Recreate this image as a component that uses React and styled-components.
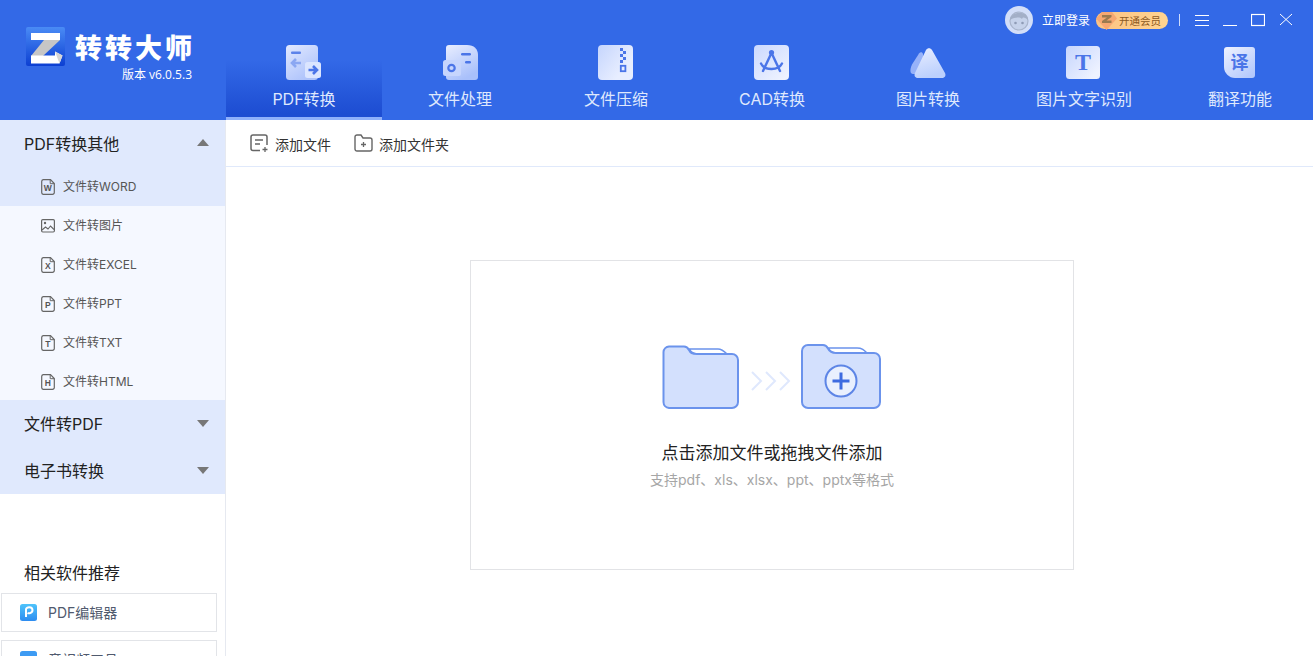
import React from "react";
import styled, { createGlobalStyle } from "styled-components";

const LATIN = `"Inter", "Noto Sans CJK SC", sans-serif`;

const Global = createGlobalStyle`
  html, body { margin: 0; padding: 0; height: 100%; overflow: hidden; background: #fff; }
  body { font-family: ${LATIN}; }
  #root { height: 100%; }
  * { box-sizing: border-box; }
`;

const Page = styled.div`
  width: 1313px; height: 656px; display: flex; flex-direction: column; overflow: hidden; background: #fff;
`;
const Header = styled.header`
  height: 120px; flex: none; background: #3369e7; display: flex;
`;
const Brand = styled.div`
  width: 226px; flex: none; padding: 27px 0 0 26px; display: flex; flex-direction: column;
`;
const BrandRow = styled.div`
  display: flex; align-items: center; gap: 10px; height: 39px;
`;
const BrandName = styled.div`
  font: 900 27px/1 "Noto Sans CJK SC", sans-serif; color: #fff; letter-spacing: 3px; white-space: nowrap;
`;
const Version = styled.div`
  width: 166px; text-align: right; font: 400 12px/14px "Open Sans", "Noto Sans CJK SC", sans-serif; color: #fff; margin-top: 2px;
`;
const HeaderMain = styled.div`
  flex: 1; display: flex; flex-direction: column; min-width: 0;
`;
const TopBar = styled.div`
  height: 42px; flex: none; display: flex; align-items: flex-start; justify-content: flex-end; padding: 6px 20px 0 0;
`;
const Avatar = styled.div`
  width: 28px; height: 28px; flex: none;
`;
const Login = styled.span`
  font: 400 12px/28px "Noto Sans CJK SC", sans-serif; color: #fff; margin-left: 9px; white-space: nowrap;
`;
const VipBadge = styled.div`
  position: relative; margin: 6px 0 0 6px; width: 72px; height: 17px; flex: none; border-radius: 9px;
  background: linear-gradient(90deg, #fcc384, #ffd490);
  font: 400 10.5px/17px "Noto Sans CJK SC", sans-serif; color: #8d5a22; padding-left: 23px; white-space: nowrap;
`;
const VipGem = styled.svg`
  position: absolute; left: -1px; top: -2px;
`;
const Divider = styled.div`
  width: 1px; height: 12px; background: #cfdcfb; margin: 8px 0 0 11px; flex: none;
`;
const WinButton = styled.button`
  border: 0; background: none; padding: 0; width: 14px; height: 14px; margin: 7px 0 0 ${p => p.$gap}px; display: block; flex: none;
  svg { display: block; }
`;
const Tabs = styled.nav`
  flex: 1; display: flex;
`;
const Tab = styled.div`
  width: 156px; flex: none; height: 78px; display: flex; flex-direction: column; align-items: center; padding-top: 1px;
  ${p => p.$active && `
    background: linear-gradient(180deg, rgba(30,78,208,0) 18px, #1d4dd2 72px);
    border-bottom: 3px solid #8fb0fb;
  `}
`;
const TabIconBox = styled.div`
  width: 40px; height: 40px; flex: none;
  svg { display: block; }
`;
const TabLabel = styled.div`
  font: 400 16px/22px ${LATIN}; color: #dfe8fd; margin-top: 5px; white-space: nowrap;
`;

const Body = styled.div`
  flex: 1; display: flex; min-height: 0;
`;
const Sidebar = styled.aside`
  width: 226px; flex: none; border-right: 1px solid #e6e9f0; display: flex; flex-direction: column; overflow: hidden;
`;
const GroupHead = styled.div`
  height: 47px; flex: none; background: #e0e9fd; display: flex; align-items: center; justify-content: space-between;
  padding: 0 16px 0 24px; font: 400 16px/22px ${LATIN}; color: #222;
`;
const Caret = styled.span`
  width: 0; height: 0; border-left: 6px solid transparent; border-right: 6px solid transparent;
  ${p => p.$up ? "border-bottom: 7px solid #777; margin-top: -3px;" : "border-top: 7px solid #777;"}
`;
const SubList = styled.div`
  background: #f5f8ff; flex: none;
`;
const SubItem = styled.div`
  height: 39px; display: flex; align-items: center; padding-left: 41px; gap: 8px;
  font: 400 12px/16px ${LATIN}; color: #555;
  background: ${p => (p.$active ? "#e0e9fd" : "transparent")};
  &:last-child { height: 38px; padding-top: 1px; }
  svg { display: block; flex: none; }
`;
const RecTitle = styled.div`
  margin: 67px 0 0 24px; font: 400 16px/22px "Noto Sans CJK SC", sans-serif; color: #222;
`;
const RecCard = styled.div`
  margin: ${p => p.$first ? "10px" : "8px"} 0 0 1px; width: 216px; height: 39px; flex: none; border: 1px solid #e2e4e8; background: #fff;
  display: flex; align-items: center; padding-left: 18px; gap: 11px;
  font: 400 14px/20px ${LATIN}; color: #505a6e;
  svg { display: block; flex: none; }
`;
const Main = styled.main`
  flex: 1; min-width: 0; display: flex; flex-direction: column;
`;
const Toolbar = styled.div`
  height: 47px; flex: none; border-bottom: 1px solid #e0e9fb; display: flex; align-items: center; padding: 0 0 2px 24px; gap: 23px;
`;
const ToolButton = styled.div`
  display: flex; align-items: center; gap: 6px;
  svg { display: block; margin-top: 2px; }
`;
const ToolLabel = styled.span`
  font: 400 14px/20px "Noto Sans CJK SC", sans-serif; color: #333; margin-top: 4px;
`;
const DropBox = styled.div`
  width: 604px; height: 310px; margin: 93px 0 0 244px; border: 1px solid #e2e3e6; display: flex; flex-direction: column; align-items: center; padding: 82px 0 0 0;
  flex: none;
`;
const Illustration = styled.div`
  height: 66px; svg { display: block; }
`;
const DropTitle = styled.div`
  margin-top: 31px; font: 400 17px/24px "Noto Sans CJK SC", sans-serif; color: #222;
`;
const DropHint = styled.div`
  margin-top: 6px; font: 400 14px/20px ${LATIN}; color: #a6a6a6;
`;

const Grad = ({ id, x2 = 1, y2 = 1, from = "#cfdcff", to = "#f3f6ff" }) => (
  <defs>
    <linearGradient id={id} x1="0" y1="0" x2={x2} y2={y2}>
      <stop offset="0" stopColor={from} />
      <stop offset="1" stopColor={to} />
    </linearGradient>
  </defs>
);

const IconPdf = () => (
  <svg width="40" height="40" viewBox="0 0 40 40">
    <Grad id="pa" from="#e2e9ff" to="#aec3fb" x2="0.6" />
    <rect x="2" y="2" width="32" height="35" rx="3.5" fill="url(#pa)" />
    <rect x="7" y="8.5" width="10" height="2.4" rx="1" fill="#5d83ea" />
    <path d="M12 16l-4 4 4 4M8 20h9" fill="none" stroke="#8ba7f2" strokeWidth="2.6" />
    <rect x="21" y="19" width="16" height="16" rx="2.5" fill="#dbe5ff" />
    <path d="M29 23l4 4-4 4M24.500 27H33" fill="none" stroke="#4b75e8" strokeWidth="2.6" />
  </svg>
);
const IconProcess = () => (
  <svg width="40" height="40" viewBox="0 0 40 40">
    <Grad id="fa" from="#e9eeff" to="#a9c0fb" x2="0.5" />
    <path d="M9 2h18c7 0 11 4 11 10v22a3 3 0 0 1-3 3H9a3 3 0 0 1-3-3V5a3 3 0 0 1 3-3z" fill="url(#fa)" />
    <rect x="3" y="17" width="18" height="16" rx="2.5" fill="#c6d5fd" />
    <circle cx="11.500" cy="25" r="3.200" fill="none" stroke="#4b75e8" strokeWidth="2.200" />
    <rect x="21" y="10" width="10" height="2.400" rx="1.200" fill="#4b75e8" />
    <rect x="25" y="18" width="6" height="2.400" rx="1.200" fill="#4b75e8" />
  </svg>
);
const IconZip = () => (
  <svg width="40" height="40" viewBox="0 0 40 40">
    <Grad id="za" from="#c5d5fd" to="#e8eeff" x2="0.8" y2="0.6" />
    <rect x="2" y="2" width="35" height="35" rx="4" fill="url(#za)" />
    <path d="M24 5h3v3h-3zM27 8h3v3h-3zM24 11h3v3h-3zM27 14h3v3h-3zM24 17h3v3h-3z" fill="#4b75e8" />
    <rect x="24.800" y="22.800" width="4.600" height="5.400" fill="none" stroke="#4b75e8" strokeWidth="1.800" />
  </svg>
);
const IconCad = () => (
  <svg width="40" height="40" viewBox="0 0 40 40">
    <Grad id="ca" from="#cbd9fe" to="#eef2ff" x2="0.8" />
    <rect x="2" y="2" width="35" height="35" rx="4" fill="url(#ca)" />
    <circle cx="19.500" cy="9.500" r="2.600" fill="#4b75e8" />
    <path d="M18.500 12L11 28M20.500 12l7.500 16M9 20.500c2 4 6 5.500 10.500 5.500s8.500-1.500 10.500-5.500" fill="none" stroke="#4b75e8" strokeWidth="2.400" strokeLinecap="round" />
  </svg>
);
const IconImage = () => (
  <svg width="40" height="40" viewBox="0 0 40 40">
    <Grad id="ia" from="#e9eeff" to="#bcd0fd" x2="0.3" />
    <path d="M4 20.500l7-11c1.500-2 3.500-1.500 4 .500l1 8-7 12H5c-3 0-3.500-4-1-9.500z" fill="#a9c0fb" opacity=".85" transform="translate(0 1)" />
    <path d="M18 7c1.500-2.500 4.500-2.500 6 0l13 23c1.200 2.500 0 5-3 5H10c-3 0-4.200-2.500-3-5z" fill="url(#ia)" />
  </svg>
);
const GlyphIcon = styled.text`
  font: 700 ${p => p.$size}px "Noto Sans CJK SC", sans-serif; fill: ${p => p.$color};
`;
const SerifGlyph = styled.text`
  font: 700 24px "Liberation Serif", serif; fill: #4b75e8;
`;
const IconOcr = () => (
  <svg width="40" height="40" viewBox="0 0 40 40">
    <Grad id="oa" from="#c5d5fd" to="#eef2ff" x2="0.9" y2="0.8" />
    <rect x="2" y="3" width="34" height="33" rx="3.500" fill="url(#oa)" />
    <SerifGlyph x="19" y="27" textAnchor="middle">T</SerifGlyph>
  </svg>
);
const IconTrans = () => (
  <svg width="40" height="40" viewBox="0 0 40 40">
    <Grad id="ta" from="#eef2ff" to="#b5c9fc" x2="0.8" />
    <path d="M7 4h25a3 3 0 0 1 3 3v25a3 3 0 0 1-3 3H15C9 35 4 30 4 24V7a3 3 0 0 1 3-3z" fill="url(#ta)" />
    <GlyphIcon x="19.500" y="26" textAnchor="middle" $size={18} $color="#4b75e8">译</GlyphIcon>
  </svg>
);

const DocLetter = styled.text`
  font: 700 8.5px "Liberation Sans", sans-serif; fill: #555;
`;
const Doc = ({ letter }) => (
  <svg width="14" height="16" viewBox="0 0 14 16">
    <path d="M2.200 .700H9.500L13.300 4.500V13.500A1.800 1.800 0 0 1 11.500 15.300H2.200A1.800 1.800 0 0 1 .700 13.500V2.500A1.800 1.800 0 0 1 2.200 .700z" fill="none" stroke="#666" strokeWidth="1.200" />
    <path d="M9.200 .800V4.700H13.200" fill="none" stroke="#666" strokeWidth="1" />
    <DocLetter x="6.800" y="11.500" textAnchor="middle">{letter}</DocLetter>
  </svg>
);
const Pic = () => (
  <svg width="14" height="16" viewBox="0 0 14 16">
    <rect x=".6" y="1.600" width="12.800" height="12.400" rx="1.200" fill="none" stroke="#666" strokeWidth="1.200" />
    <circle cx="4" cy="5" r="1.200" fill="#666" />
    <path d="M1 12l3.500-3 2.500 2 2.500-3 3.500 3.500" fill="none" stroke="#666" strokeWidth="1.100" />
  </svg>
);

const Logo = () => (
  <svg width="39" height="39" viewBox="0 0 39 39">
    <defs>
      <linearGradient id="lg" x1="0" y1="0" x2="0" y2="1">
        <stop offset="0" stopColor="#4a8bf5" />
        <stop offset="1" stopColor="#0c3fd2" />
      </linearGradient>
    </defs>
    <rect width="39" height="39" rx="2" fill="url(#lg)" />
    <path d="M18 13h16L17 29H5z" fill="#c6c6c6" />
    <path d="M5 6h29v7H5z" fill="#fff" />
    <path d="M5 28.500h24v-4l7.500 4-3 8H5z" fill="#fff" />
    <path d="M29 24.500l7.500 4-3 8z" fill="#d5d5d5" />
  </svg>
);

const tabs = [
  ["PDF转换", IconPdf], ["文件处理", IconProcess], ["文件压缩", IconZip], ["CAD转换", IconCad],
  ["图片转换", IconImage], ["图片文字识别", IconOcr], ["翻译功能", IconTrans],
];
const subs = [
  ["文件转WORD", "W"], ["文件转图片", null], ["文件转EXCEL", "X"], ["文件转PPT", "P"], ["文件转TXT", "T"], ["文件转HTML", "H"],
];

const Folder = ({ plus }) => plus ? (
  <g transform="translate(139 0)">
    <path d="M27 5H56C61 5 63 7 66 10H35C31 10 29 8 27 5Z" fill="#fff" stroke="#6b93ec" strokeWidth="1.600" />
    <path d="M7 2H22C25 2 26 3.500 27 5.500C28.500 8.500 30 10 35 10H73A6 6 0 0 1 79 16V59A6 6 0 0 1 73 65H7A6 6 0 0 1 1 59V8A6 6 0 0 1 7 2Z" fill="#d3e0fd" stroke="#6b93ec" strokeWidth="2" />
    <circle cx="40" cy="38" r="15.500" fill="#e9f0fe" stroke="#5d85e6" strokeWidth="2" />
    <path d="M40 29.500v17M31.500 38h17" stroke="#3d6be0" strokeWidth="3" />
  </g>
) : (
  <g>
    <path d="M27 6H56C60 6 62 8 65 11H35C31 11 29 9 27 6Z" fill="#fff" stroke="#6b93ec" strokeWidth="1.600" />
    <path d="M7 3.500H22C25 3.500 26 5 27 7C28.500 10 30 11 35 11H70A6 6 0 0 1 76 17V59A6 6 0 0 1 70 65H7A6 6 0 0 1 1.500 59V9A6 6 0 0 1 7 3.500Z" fill="#d3e0fd" stroke="#6b93ec" strokeWidth="2" />
  </g>
);

export default function App() {
  return (
    <Page>
      <Global />
      <Header>
        <Brand>
          <BrandRow><Logo /><BrandName>转转大师</BrandName></BrandRow>
          <Version>版本 v6.0.5.3</Version>
        </Brand>
        <HeaderMain>
          <TopBar>
            <Avatar>
              <svg width="28" height="28" viewBox="0 0 28 28">
                <circle cx="14" cy="14" r="14" fill="#d3def8" />
                <circle cx="14" cy="15" r="9" fill="#c6d2ea" stroke="#a9b5cc" strokeWidth="1.200" />
                <path d="M5 14c0-9 18-10 18 0-4-3-5-3-6-1-2-2-7-2-12 1z" fill="#a3afc7" />
                <circle cx="10.500" cy="17" r="1.300" fill="#8f9cb6" />
                <circle cx="17.500" cy="17" r="1.300" fill="#8f9cb6" />
              </svg>
            </Avatar>
            <Login>立即登录</Login>
            <VipBadge>
              <VipGem width="24" height="21" viewBox="0 0 24 21">
                <path d="M1 8.500l6-6.500h10l5 6.500-10.500 11.500z" fill="#f7a872" />
                <path d="M7 5h9.500v2l-5 3.500h5V13H7v-2l5-3.500H7z" fill="#9c7a4e" />
              </VipGem>
              开通会员
            </VipBadge>
            <Divider />
            <WinButton $gap={15}>
              <svg width="14" height="14" viewBox="0 0 14 14"><path d="M0 2.500h14M0 7.500h14M0 12.500h14" stroke="#fff" /></svg>
            </WinButton>
            <WinButton $gap={14}>
              <svg width="14" height="14" viewBox="0 0 14 14"><path d="M0 12.500h14" stroke="#fff" /></svg>
            </WinButton>
            <WinButton $gap={14}>
              <svg width="14" height="14" viewBox="0 0 14 14"><rect x=".5" y="1.500" width="13" height="11" fill="none" stroke="#fff" strokeWidth="1.200" /></svg>
            </WinButton>
            <WinButton $gap={14}>
              <svg width="14" height="14" viewBox="0 0 14 14"><path d="M1 1l12 11M13 1L1 12" stroke="#fff" /></svg>
            </WinButton>
          </TopBar>
          <Tabs>
            {tabs.map(([label, Ico], i) => (
              <Tab key={label} $active={i === 0}>
                <TabIconBox><Ico /></TabIconBox>
                <TabLabel>{label}</TabLabel>
              </Tab>
            ))}
          </Tabs>
        </HeaderMain>
      </Header>
      <Body>
        <Sidebar>
          <GroupHead>PDF转换其他<Caret $up /></GroupHead>
          <SubList>
            {subs.map(([label, letter], i) => (
              <SubItem key={label} $active={i === 0}>
                {letter ? <Doc letter={letter} /> : <Pic />}
                {label}
              </SubItem>
            ))}
          </SubList>
          <GroupHead>文件转PDF<Caret /></GroupHead>
          <GroupHead>电子书转换<Caret /></GroupHead>
          <RecTitle>相关软件推荐</RecTitle>
          <RecCard $first>
            <svg width="17" height="17" viewBox="0 0 17 17">
              <defs><linearGradient id="rp" x1="0" y1="0" x2="0" y2="1"><stop offset="0" stopColor="#4fc4fb" /><stop offset="1" stopColor="#2d8cf0" /></linearGradient></defs>
              <rect width="17" height="17" rx="2.500" fill="url(#rp)" />
              <path d="M6 13V5.500c0-3 6.500-3 6.500 .5s-4 3.500-5 3" fill="none" stroke="#fff" strokeWidth="2" />
            </svg>
            PDF编辑器
          </RecCard>
          <RecCard>
            <svg width="17" height="17" viewBox="0 0 17 17"><rect width="17" height="17" rx="2.500" fill="#3d9bf3" /></svg>
            音视频工具
          </RecCard>
        </Sidebar>
        <Main>
          <Toolbar>
            <ToolButton>
              <svg width="19" height="19" viewBox="0 0 19 19">
                <path d="M10 16.500H3A2 2 0 0 1 1 14.500V3A2 2 0 0 1 3 1h12a2 2 0 0 1 2 2v8" fill="none" stroke="#666" strokeWidth="1.500" />
                <path d="M5 6h8M5 10h5" stroke="#666" strokeWidth="1.500" />
                <path d="M15 13v5M12.500 15.500h5" stroke="#666" strokeWidth="1.300" />
              </svg>
              <ToolLabel>添加文件</ToolLabel>
            </ToolButton>
            <ToolButton>
              <svg width="19" height="19" viewBox="0 0 19 19">
                <path d="M1 3a2 2 0 0 1 2-2h4l2 3h7a2 2 0 0 1 2 2v9a2 2 0 0 1-2 2H3a2 2 0 0 1-2-2z" fill="none" stroke="#666" strokeWidth="1.400" />
                <path d="M9.500 8v5M7 10.500h5" stroke="#666" strokeWidth="1.300" />
              </svg>
              <ToolLabel>添加文件夹</ToolLabel>
            </ToolButton>
          </Toolbar>
          <DropBox>
            <Illustration>
              <svg width="220" height="66" viewBox="0 0 220 66">
                <Folder />
                <path d="M90 29l9 9-9 9M104 29l9 9-9 9M118 29l9 9-9 9" fill="none" stroke="#dfe8fd" strokeWidth="2" />
                <Folder plus />
              </svg>
            </Illustration>
            <DropTitle>点击添加文件或拖拽文件添加</DropTitle>
            <DropHint>支持pdf、xls、xlsx、ppt、pptx等格式</DropHint>
          </DropBox>
        </Main>
      </Body>
    </Page>
  );
}
